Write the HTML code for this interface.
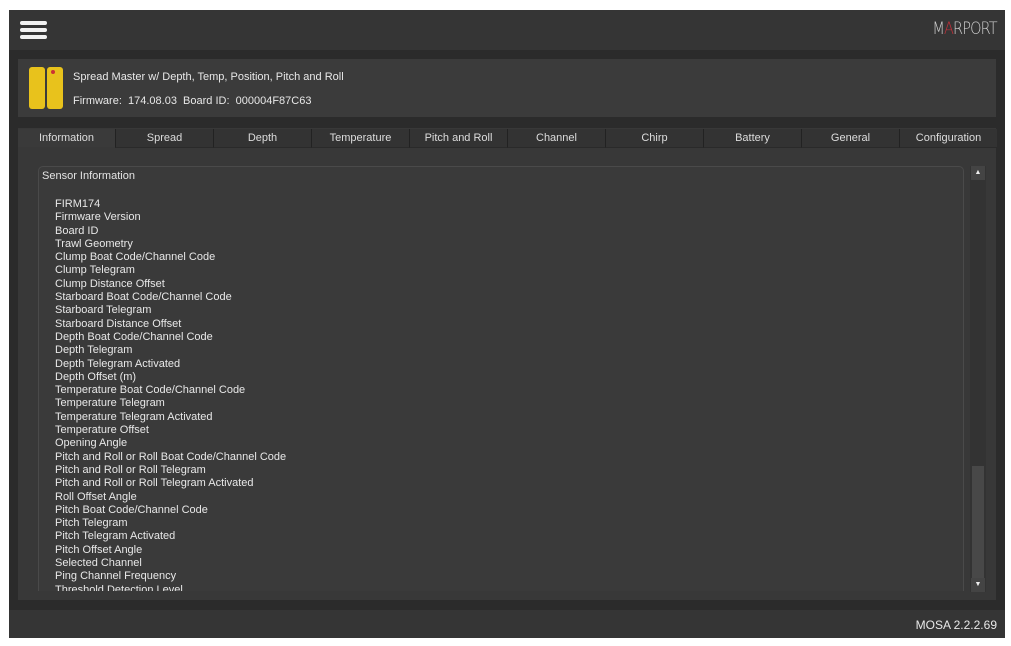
<!DOCTYPE html>
<html><head><style>
body{margin:0;width:1011px;height:646px;background:#fff;position:relative;font-family:"Liberation Sans",sans-serif;overflow:hidden}
.app{position:absolute;left:9px;top:10px;width:996px;height:628px;background:#2b2b2b}
.top{position:absolute;left:0;top:0;width:996px;height:40px;background:#353535}
.ham{position:absolute;left:11px;width:27px;height:4px;background:#f2f2f2;border-radius:2px}
.logo{position:absolute;right:8px;top:9px;color:#d0d0d0;font-size:17px;letter-spacing:-1px;font-family:"DejaVu Sans",sans-serif;font-weight:200;transform:scaleX(0.85);transform-origin:right}
.hdr{position:absolute;left:9px;top:49px;width:978px;height:58px;background:#3b3b3b}
.hdr .t{position:absolute;left:55px;color:#e8e8e8;font-size:11px}
.tabs{position:absolute;left:9px;top:118px;width:978px;height:472px;background:#383838}
.tab{position:absolute;top:1px;height:18px;background:#333;border-left:1px solid #222;border-bottom:1px solid #2a2a2a;color:#ddd;font-size:11px;text-align:center;line-height:18px}
.tab.a{background:#3a3a3a;border:none}
.grp{position:absolute;left:20px;top:38px;width:924px;height:424px;border:1px solid #4a4a4a;border-bottom:none;border-radius:5px 5px 0 0;background:#3a3a3a;overflow:hidden}
.grp .h{position:absolute;left:3px;top:3px;color:#e4e4e4;font-size:11px}
.grp .l{position:absolute;left:16px;top:31px;color:#e8e8e8;font-size:11px;line-height:13.3px}
.sb{position:absolute;left:952px;top:38px;width:16px;height:426px;background:#333}
.foot{position:absolute;left:0;top:600px;width:996px;height:28px;background:#353535}
</style></head><body>
<div class="app">
<div class="top">
<div class="ham" style="top:11px"></div><div class="ham" style="top:18px"></div><div class="ham" style="top:25px"></div>
<div class="logo">M<span style="color:#c0303a">A</span>RPORT</div>
</div>
<div class="hdr">
<div style="position:absolute;left:11px;top:8px;width:34px;height:42px;">
<div style="position:absolute;left:0;top:0;width:16px;height:42px;background:#e8c21c;border-radius:3px"></div>
<div style="position:absolute;left:18px;top:0;width:16px;height:42px;background:#e8c21c;border-radius:3px"></div>
<div style="position:absolute;left:22px;top:3px;width:4px;height:4px;background:#c33;border-radius:2px"></div>
</div>
<div class="t" style="top:12px">Spread Master w/ Depth, Temp, Position, Pitch and Roll</div>
<div class="t" style="top:36px">Firmware:&nbsp; 174.08.03&nbsp; Board ID:&nbsp; 000004F87C63</div>
</div>
<div class="tabs">
<div class="tab a" style="left:0;width:97px">Information</div>
<div class="tab" style="left:97px;width:97px">Spread</div>
<div class="tab" style="left:195px;width:97px">Depth</div>
<div class="tab" style="left:293px;width:97px">Temperature</div>
<div class="tab" style="left:391px;width:97px">Pitch and Roll</div>
<div class="tab" style="left:489px;width:97px">Channel</div>
<div class="tab" style="left:587px;width:97px">Chirp</div>
<div class="tab" style="left:685px;width:97px">Battery</div>
<div class="tab" style="left:783px;width:97px">General</div>
<div class="tab" style="left:881px;width:97px">Configuration</div>
<div class="grp"><div class="h">Sensor Information</div>
<div class="l">FIRM174<br>Firmware Version<br>Board ID<br>Trawl Geometry<br>Clump Boat Code/Channel Code<br>Clump Telegram<br>Clump Distance Offset<br>Starboard Boat Code/Channel Code<br>Starboard Telegram<br>Starboard Distance Offset<br>Depth Boat Code/Channel Code<br>Depth Telegram<br>Depth Telegram Activated<br>Depth Offset (m)<br>Temperature Boat Code/Channel Code<br>Temperature Telegram<br>Temperature Telegram Activated<br>Temperature Offset<br>Opening Angle<br>Pitch and Roll or Roll Boat Code/Channel Code<br>Pitch and Roll or Roll Telegram<br>Pitch and Roll or Roll Telegram Activated<br>Roll Offset Angle<br>Pitch Boat Code/Channel Code<br>Pitch Telegram<br>Pitch Telegram Activated<br>Pitch Offset Angle<br>Selected Channel<br>Ping Channel Frequency<br>Threshold Detection Level</div>
</div>
<div class="sb">
<div style="position:absolute;left:1px;top:0;width:14px;height:14px;background:#444;color:#eee;font-size:7px;text-align:center;line-height:14px">▲</div>
<div style="position:absolute;left:2px;top:300px;width:12px;height:112px;background:#484848"></div>
<div style="position:absolute;left:1px;top:412px;width:14px;height:14px;background:#444;color:#eee;font-size:7px;text-align:center;line-height:14px">▼</div>
</div>
</div>
<div class="foot"><div style="position:absolute;right:8px;top:8px;color:#e8e8e8;font-size:12px">MOSA 2.2.2.69</div></div>
</div>
</body></html>
